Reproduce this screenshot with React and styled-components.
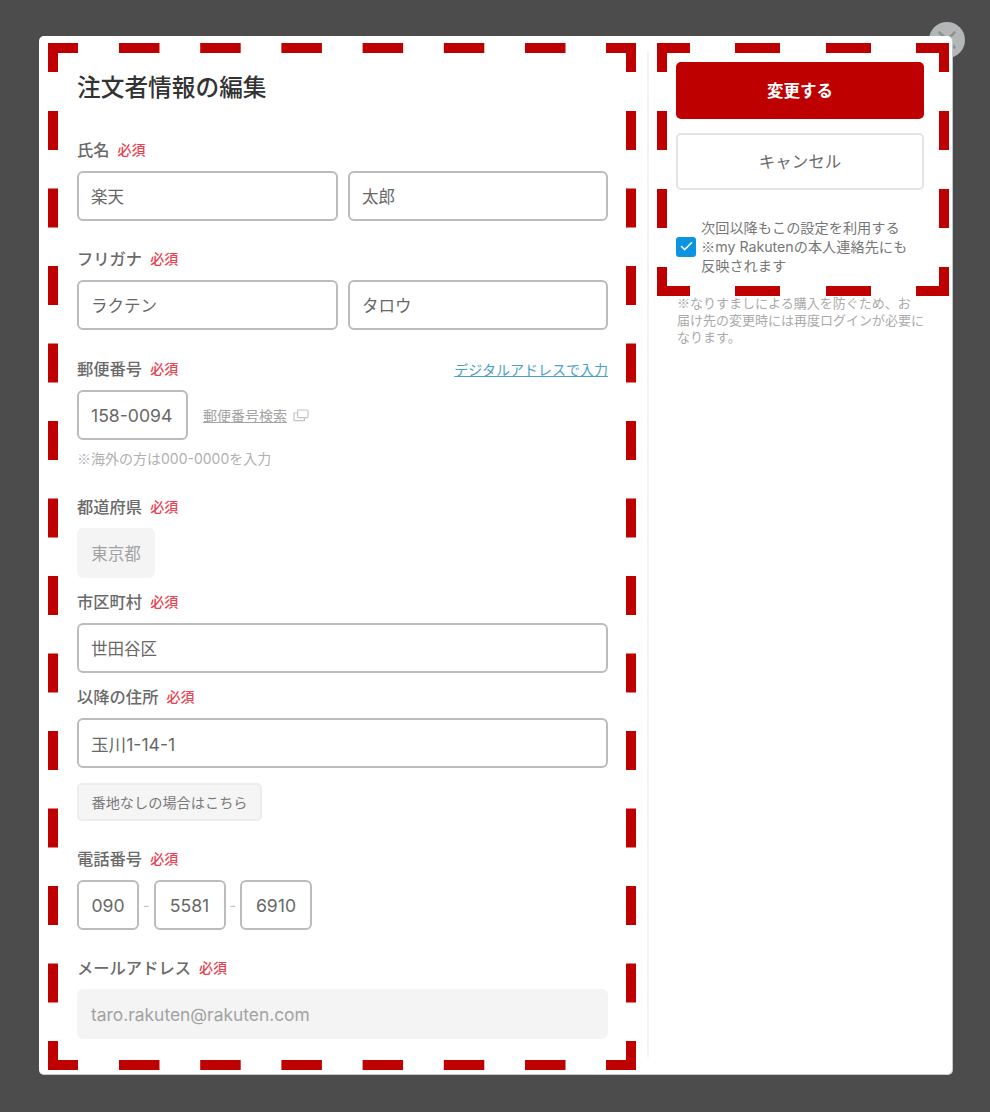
import styled, { createGlobalStyle } from "styled-components";
import { Check, X } from "lucide-react";

const GlobalStyle = createGlobalStyle`
  html, body {
    margin: 0;
    padding: 0;
    background: #4c4c4c;
  }
  * {
    box-sizing: border-box;
  }
  body, input, button {
    font-family: Inter, "Noto Sans CJK JP", "Noto Sans", sans-serif;
  }
`;

const RED = "#bf0000";

function DashFrame({ left, top, w, h, hStart, hStep, hLen, vStart, vStep, vLen, corner }) {
  const bars = [];
  const t = 10;
  for (let x = hStart; x + hLen <= w - corner + 1; x += hStep) {
    bars.push([x, 0, hLen, t], [x, h - t, hLen, t]);
  }
  for (let y = vStart; y + vLen <= h - 29 + 1; y += vStep) {
    bars.push([0, y, t, vLen], [w - t, y, t, vLen]);
  }
  // the four corners
  [0, w - corner].forEach((x) => {
    bars.push([x, 0, corner, t], [x, h - t, corner, t]);
  });
  [0, w - t].forEach((x) => {
    bars.push([x, 0, t, 29], [x, h - 29, t, 29]);
  });
  return (
    <Frame $left={left} $top={top} width={w} height={h} viewBox={`0 0 ${w} ${h}`}>
      {bars.map(([x, y, bw, bh], i) => (
        <rect key={i} x={x} y={y} width={bw} height={bh} fill={RED} />
      ))}
    </Frame>
  );
}

function Label({ children }) {
  return (
    <LabelText>
      {children}
      <Required>必須</Required>
    </LabelText>
  );
}

export default function App() {
  return (
    <Page>
      <GlobalStyle />
      <Dialog>
        <CloseButton aria-label="閉じる">
          <X size={30} strokeWidth={2} color="#8e9191" />
        </CloseButton>
        <Modal>
          <FormPane>
            <Title>注文者情報の編集</Title>

            <Field $top={36}>
              <Label>氏名</Label>
              <TwoCols>
                <TextInput defaultValue="楽天" />
                <TextInput defaultValue="太郎" />
              </TwoCols>
            </Field>

            <Field $top={28}>
              <Label>フリガナ</Label>
              <TwoCols>
                <TextInput defaultValue="ラクテン" />
                <TextInput defaultValue="タロウ" />
              </TwoCols>
            </Field>

            <Field $top={29}>
              <LabelRow>
                <Label>郵便番号</Label>
                <DigitalLink href="#">デジタルアドレスで入力</DigitalLink>
              </LabelRow>
              <ZipRow>
                <TextInput $width={111} $latin defaultValue="158-0094" />
                <ZipSearch href="#">郵便番号検索</ZipSearch>
                <svg width="16" height="13" viewBox="0 0 16 13" fill="none" stroke="#c4c4c4" strokeWidth="1.2">
                  <rect x="4.6" y="1" width="10.4" height="7.6" rx="1" />
                  <path d="M4.6 4H1v7.6h10.4V8.6" />
                </svg>
              </ZipRow>
              <Note><Mark>※</Mark>海外の方は000-0000を入力</Note>
            </Field>

            <Field $top={29}>
              <Label>都道府県</Label>
              <ReadOnlyBox $width={78}>東京都</ReadOnlyBox>
            </Field>

            <Field $top={14}>
              <Label>市区町村</Label>
              <TextInput defaultValue="世田谷区" />
            </Field>

            <Field $top={14}>
              <Label>以降の住所</Label>
              <TextInput $latin defaultValue="玉川1-14-1" />
              <NoNumberButton>番地なしの場合はこちら</NoNumberButton>
            </Field>

            <Field $top={28}>
              <Label>電話番号</Label>
              <PhoneRow>
                <TextInput $width={62} $center $latin defaultValue="090" />
                <PhoneDash>-</PhoneDash>
                <TextInput $width={72} $center $latin defaultValue="5581" />
                <PhoneDash>-</PhoneDash>
                <TextInput $width={72} $center $latin defaultValue="6910" />
              </PhoneRow>
            </Field>

            <Field $top={28}>
              <Label>メールアドレス</Label>
              <ReadOnlyBox $mail>taro.rakuten@rakuten.com</ReadOnlyBox>
            </Field>
          </FormPane>

          <SidePane>
            <SubmitButton>変更する</SubmitButton>
            <CancelButton>キャンセル</CancelButton>
            <SaveRow>
              <CheckBox>
                <Check size={15} strokeWidth={2.4} color="#fff" />
              </CheckBox>
              <SaveText>
                次回以降もこの設定を利用する
                <br />
                <Mark>※</Mark>my Rakutenの本人連絡先にも
                <br />
                反映されます
              </SaveText>
            </SaveRow>
            <SideNote>
              <Mark>※</Mark>なりすましによる購入を防ぐため、お
              <br />
              届け先の変更時には再度ログインが必要に
              <br />
              なります。
            </SideNote>
          </SidePane>

          <DashFrame left={9} top={7} w={588} h={1027} hStart={71} hStep={81.2} hLen={40.5} vStart={68} vStep={77.5} vLen={39} corner={30} />
          <DashFrame left={618} top={7} w={292} h={253} hStart={78} hStep={91} hLen={45} vStart={68} vStep={78} vLen={39} corner={33} />
        </Modal>
      </Dialog>
    </Page>
  );
}

const Page = styled.div`
  width: 990px;
  height: 1112px;
  padding: 36px 38px 37px 39px;
  background: #4c4c4c;
  overflow: hidden;
`;

const Dialog = styled.div`
  position: relative;
  width: 913px;
  height: 1039px;
`;

const CloseButton = styled.button`
  position: absolute;
  top: -14px;
  right: -13px;
  width: 36px;
  height: 36px;
  padding: 0;
  border: none;
  border-radius: 50%;
  background: #b4b7b7;
  display: flex;
  align-items: center;
  justify-content: center;
`;

const Modal = styled.div`
  position: relative;
  width: 100%;
  height: 100%;
  display: flex;
  background: #fff;
  border-radius: 5px;
  border-bottom: 1px solid #c9cccc;
  box-shadow: 1px 0 0 #c4c8c8;
`;

const Frame = styled.svg`
  position: absolute;
  left: ${(p) => p.$left}px;
  top: ${(p) => p.$top}px;
`;

const FormPane = styled.div`
  width: 610px;
  margin: 16px 0 17px;
  padding: 20px 39px 0 38px;
  border-right: 2px solid #f3f3f3;
`;

const Title = styled.h2`
  margin: 0;
  font-size: 23.7px;
  line-height: 32px;
  font-weight: 500;
  color: #333;
`;

const Field = styled.div`
  margin-top: ${(p) => p.$top}px;
`;

const Mark = styled.span`
  font-family: "Noto Sans CJK JP", sans-serif;
  line-height: 1;
`;

const LabelText = styled.div`
  display: flex;
  align-items: center;
  height: 20px;
  padding-bottom: 2px;
  font-size: 16.3px;
  font-weight: 500;
  color: #6a6a6a;
  margin-bottom: 11px;
`;

const Required = styled.span`
  margin-left: 8px;
  font-size: 14px;
  font-weight: 500;
  color: #e8414f;
`;

const LabelRow = styled.div`
  display: flex;
  justify-content: space-between;
  align-items: flex-start;
`;

const DigitalLink = styled.a`
  padding-top: 1px;
  font-size: 14px;
  line-height: 20px;
  color: #4a9fc9;
  text-decoration: underline;
`;

const TwoCols = styled.div`
  display: grid;
  grid-template-columns: 261px 260px;
  gap: 10px;
`;

const TextInput = styled.input`
  display: block;
  width: ${(p) => (p.$width ? `${p.$width}px` : "100%")};
  height: 50px;
  padding: ${(p) => (p.$center ? "0" : "0 12px")};
  border: 2px solid #bcbcbc;
  border-radius: 6px;
  outline: none;
  background: #fff;
  font-size: ${(p) => (p.$latin ? "17.6px" : "16.5px")};
  color: #686868;
  text-align: ${(p) => (p.$center ? "center" : "left")};
`;

const ZipRow = styled.div`
  display: flex;
  align-items: center;
`;

const ZipSearch = styled.a`
  margin: 0 6px 0 15px;
  font-size: 14px;
  color: #a3a3a3;
  text-decoration: underline;
`;

const Note = styled.p`
  margin: 10px 0 0;
  font-size: 14px;
  line-height: 18px;
  color: #b0b0b0;
`;

const ReadOnlyBox = styled.div`
  display: flex;
  align-items: center;
  justify-content: ${(p) => (p.$mail ? "flex-start" : "center")};
  width: ${(p) => (p.$width ? `${p.$width}px` : "100%")};
  height: 50px;
  padding: 0 ${(p) => (p.$mail ? 14 : 0)}px;
  border-radius: 6px;
  background: #f4f4f4;
  font-size: ${(p) => (p.$mail ? "17.4px" : "16.5px")};
  color: #a2a2a2;
  white-space: nowrap;
`;

const NoNumberButton = styled.button`
  display: block;
  margin-top: 15px;
  width: 185px;
  height: 38px;
  padding: 0;
  border: 2px solid #ededed;
  border-radius: 5px;
  background: #f5f5f5;
  font-size: 14.2px;
  color: #7a7a7a;
  white-space: nowrap;
`;

const PhoneRow = styled.div`
  display: flex;
  align-items: center;
`;

const PhoneDash = styled.span`
  width: 14.5px;
  text-align: center;
  font-size: 15px;
  color: #c4c4c4;
`;

const SidePane = styled.div`
  flex: 1;
  padding: 26px 27px 0 27px;
  min-width: 0;
`;

const SubmitButton = styled.button`
  display: block;
  width: 248px;
  height: 57px;
  padding: 0 0 2px;
  border: none;
  border-radius: 5px;
  background: ${RED};
  font-size: 16.5px;
  font-weight: 700;
  color: #fff;
`;

const CancelButton = styled.button`
  display: block;
  width: 248px;
  height: 57px;
  margin-top: 14px;
  padding: 0 0 2px;
  border: 2px solid #e4e4e4;
  border-radius: 5px;
  background: #fff;
  font-size: 16.5px;
  color: #6a6a6a;
`;

const SaveRow = styled.div`
  display: flex;
  align-items: center;
  margin-top: 28px;
  gap: 5px;
`;

const CheckBox = styled.span`
  flex: none;
  display: flex;
  align-items: center;
  justify-content: center;
  width: 20px;
  height: 20px;
  border-radius: 3px;
  background: #0d94e0;
`;

const SaveText = styled.p`
  margin: 0;
  font-size: 14.2px;
  line-height: 19px;
  color: #777;
  white-space: nowrap;
`;

const SideNote = styled.p`
  margin: 20px 0 0 1px;
  font-size: 13px;
  line-height: 17px;
  color: #aaa;
  white-space: nowrap;
`;
